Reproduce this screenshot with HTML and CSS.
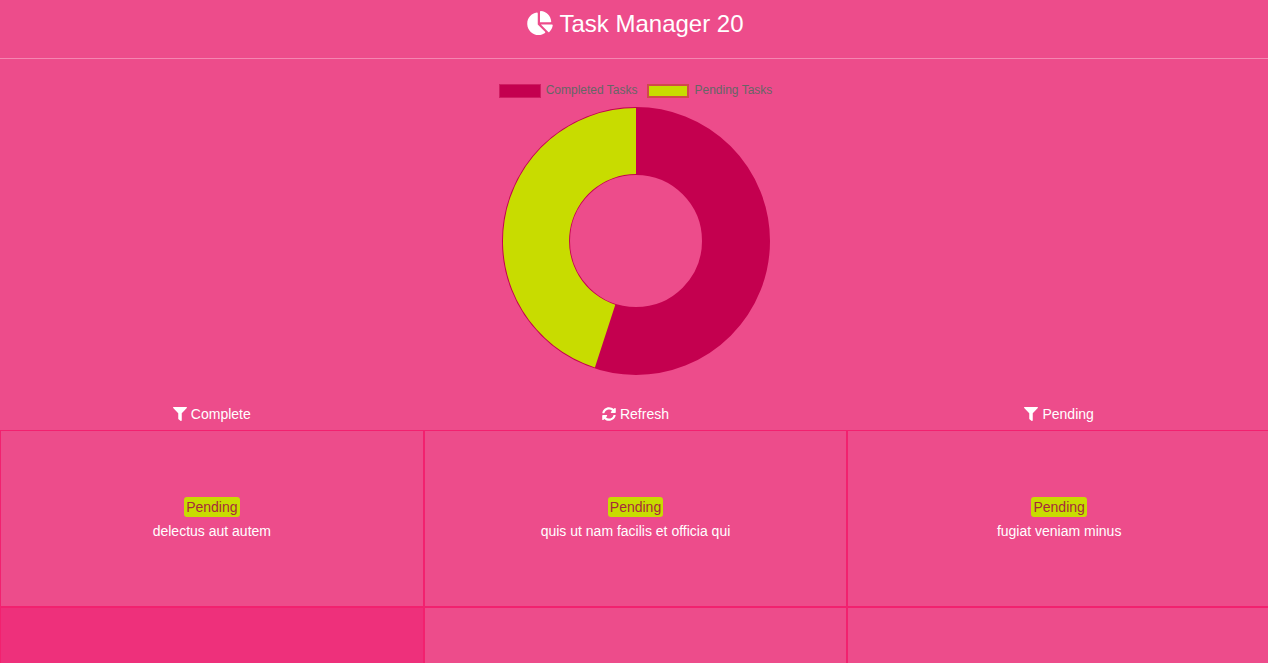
FILE: index.html
```html
<!DOCTYPE html>
<html lang="en">
<head>
<meta charset="utf-8">
<title>Task Manager</title>
<link rel="stylesheet" href="styles.css">
</head>
<body>
<svg class="sprite" aria-hidden="true">
  <symbol id="filter" viewBox="0 0 512 512"><path d="M487.976 0H24.028C2.71 0-8.047 25.866 7.058 40.971L192 225.941V432c0 7.831 3.821 15.17 10.237 19.662l80 55.98C298.02 518.69 320 507.493 320 487.98V225.941l184.947-184.97C520.021 25.896 509.338 0 487.976 0z"/></symbol>
</svg>
<div class="page">
  <header class="header">
    <h1 class="title">
      <svg class="title-icon" viewBox="0 0 544 512" aria-hidden="true"><path d="M527.79 288H290.5l158.03 158.03c6.04 6.04 15.98 6.53 22.19.68 38.7-36.46 65.32-85.61 73.13-140.86 1.34-9.46-6.51-17.85-16.06-17.85zm-15.83-64.8C503.72 103.74 408.26 8.28 288.8.04 279.68-.59 272 7.1 272 16.24V240h223.77c9.14 0 16.82-7.68 16.19-16.8zM224 288V50.71c0-9.55-8.39-17.4-17.84-16.06C86.99 51.49-4.1 155.6.14 280.37 4.5 408.51 114.83 513.59 243.03 511.98c50.4-.63 96.97-16.87 135.26-44.03 7.9-5.6 8.42-17.23 1.57-24.08L224 288z"/></svg>
      <span class="title-text">Task Manager 20</span>
    </h1>
  </header>
  <main>
    <section class="chart">
      <ul class="legend">
        <li class="legend-item"><span class="swatch swatch-complete"></span>Completed Tasks</li>
        <li class="legend-item"><span class="swatch swatch-pending"></span>Pending Tasks</li>
      </ul>
      <svg class="donut" viewBox="-134 -134 268 268" role="img" aria-label="11 completed tasks, 9 pending tasks">
        <circle class="ring" r="100"/>
        <path class="slice" d="M0 -133A133 133 0 0 0 -41.1 126.5L-20.7 63.7A67 67 0 0 1 0 -67Z"/>
      </svg>
    </section>
    <nav class="actions">
      <button class="action" type="button"><svg class="icon" aria-hidden="true"><use href="#filter"/></svg>Complete</button>
      <button class="action" type="button"><svg class="icon" viewBox="0 0 512 512" aria-hidden="true"><path d="M370.72 133.28C339.458 104.008 298.888 87.962 255.848 88c-77.458.068-144.328 53.178-162.791 126.85-1.344 5.363-6.122 9.15-11.651 9.15H24.103c-7.498 0-13.194-6.807-11.807-14.176C33.933 94.924 134.813 8 256 8c66.448 0 126.791 26.136 171.315 68.685L463.03 40.97C478.149 25.851 504 36.559 504 57.941V192c0 13.255-10.745 24-24 24H345.941c-21.382 0-32.09-25.851-16.971-40.971l41.75-41.749zM32 296h134.059c21.382 0 32.09 25.851 16.971 40.971l-41.75 41.75c31.262 29.273 71.835 45.319 114.876 45.28 77.418-.07 144.315-53.144 162.787-126.849 1.344-5.363 6.122-9.15 11.651-9.15h57.304c7.498 0 13.194 6.807 11.807 14.176C478.067 417.076 377.187 504 256 504c-66.448 0-126.791-26.136-171.315-68.685L48.97 471.03C33.851 486.149 8 475.441 8 454.059V320c0-13.255 10.745-24 24-24z"/></svg>Refresh</button>
      <button class="action" type="button"><svg class="icon" aria-hidden="true"><use href="#filter"/></svg>Pending</button>
    </nav>
    <section class="tasks">
      <article class="task"><span class="badge">Pending</span><p class="task-name">delectus aut autem</p></article>
      <article class="task"><span class="badge">Pending</span><p class="task-name">quis ut nam facilis et officia qui</p></article>
      <article class="task"><span class="badge">Pending</span><p class="task-name">fugiat veniam minus</p></article>
      <article class="task task-done"></article>
      <article class="task"></article>
      <article class="task"></article>
    </section>
  </main>
</div>
</body>
</html>
```
FILE: styles.css
```css
* {
  box-sizing: border-box;
}

html {
  background: #ed4c8b;
}

body {
  margin: 0;
  height: 100vh;
  overflow: hidden;
  color: #fff;
  font: 14px/20px "Liberation Sans", Arial, sans-serif;
}

.sprite {
  display: none;
}

.page {
  margin-right: -3px;
}

.header {
  padding: 7px 0 19px;
  border-bottom: 1px solid #f586b2;
}

.title {
  display: flex;
  justify-content: center;
  align-items: center;
  gap: 6px;
  margin: 0;
  font-size: 24px;
  line-height: 30px;
  font-weight: 400;
}

.title-text {
  padding-top: 2px;
}

.title-icon {
  width: 26px;
  height: 24px;
  fill: currentColor;
}

.chart {
  display: flex;
  flex-direction: column;
  align-items: center;
  padding-top: 23px;
}

.legend {
  display: flex;
  gap: 10px;
  margin: 0 0 9px;
  padding: 0;
  list-style: none;
  color: #666;
  font-size: 12px;
  line-height: 16px;
}

.legend-item {
  display: flex;
  align-items: center;
  gap: 5px;
}

.swatch {
  width: 42px;
  height: 14px;
  margin-top: 2px;
  border: 1px solid #d01e63;
}

.swatch-complete {
  background: #c4004f;
}

.swatch-pending {
  border: 2px solid #d04a4a;
  background: #c8dc00;
}

.donut {
  width: 268px;
  height: 268px;
}

.ring {
  fill: none;
  stroke: #c4004f;
  stroke-width: 68px;
}

.slice {
  fill: #c8dc00;
}

.actions,
.tasks {
  display: grid;
  grid-template-columns: repeat(3, 1fr);
}

.actions {
  padding-top: 23px;
}

.action {
  display: flex;
  justify-content: center;
  align-items: center;
  gap: 4px;
  padding: 6px 0;
  border: 0;
  background: none;
  color: inherit;
  font: inherit;
  cursor: pointer;
}

.icon {
  width: 14px;
  height: 14px;
  fill: currentColor;
}

.task {
  display: flex;
  flex-direction: column;
  align-items: center;
  justify-content: center;
  gap: 4px;
  min-height: 177px;
  border: 1px solid #f2216f;
}

.task-done {
  background: #ee307b;
}

.badge {
  padding: 0 2px;
  border-radius: 3px;
  background: #c8dc00;
  color: #a62a3c;
}

.task-name {
  margin: 0;
}
```
